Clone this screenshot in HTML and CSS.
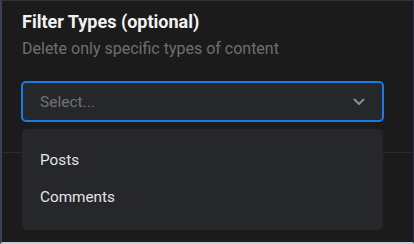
FILE: index.html
```
<!DOCTYPE html>
<html lang="en">
<head>
    <meta charset="UTF-8">
    <meta name="viewport" content="width=device-width, initial-scale=1.0">
    <title>Filter Types</title>
    <link rel="stylesheet" href="styles.css">
</head>
<body>

    <div class="panel">
        <div class="field">
            <h3 class="field-title">Filter Types (optional)</h3>
            <p class="field-hint">Delete only specific types of content</p>

            <div class="select-wrap">
                <div class="select-box">
                    <span class="placeholder">Select...</span>
                    <svg class="chevron" width="12" height="8" viewBox="0 0 12 8">
                        <path d="M1.5 1.5 L6 6 L10.5 1.5" fill="none" stroke="#8b8d91" stroke-width="2" stroke-linecap="round" stroke-linejoin="round"/>
                    </svg>
                </div>

                <ul class="menu">
                    <li>Posts</li>
                    <li>Comments</li>
                </ul>
            </div>
        </div>

        <div class="divider"></div>
    </div>

</body>
</html>
```

FILE: styles.css
```
body {
    font-family: Roboto, "Noto Sans", Arial, sans-serif;
    background-color: #1b1b1b;
    margin: 0;
    padding: 0;
}

.panel {
    box-sizing: border-box;
    width: 414px;
    height: 244px;
    background-color: #1b1b1b;
    border-top: 1px solid #2e323b;
    border-left: 2px solid #3b4150;
    border-right: 1px solid #2b3040;
    border-bottom: 2px solid #c8cdd6;
    overflow: hidden;
}

.field {
    padding: 10px 28px 0 20px;
}

    .field-title {
        margin: 0;
        font-size: 18px;
        font-weight: 700;
        line-height: 22px;
        color: #f2f2f2;
    }

    .field-hint {
        margin: 6px 0 0;
        font-size: 16px;
        line-height: 20px;
        color: #6f6f6f;
    }

.select-wrap {
    position: relative;
    margin-top: 22px;
}

.select-box {
    box-sizing: border-box;
    height: 41px;
    width: 363px;
    margin-left: -1px;
    display: flex;
    align-items: center;
    justify-content: space-between;
    padding: 0 17px 0 17px;
    background-color: #25272b;
    border: 2px solid #1a7be6;
    border-radius: 5px;
}

    .placeholder {
        font-size: 15.5px;
        color: #717378;
    }

.menu {
    position: absolute;
    top: 48px;
    left: 0;
    width: 361px;
    height: 101px;
    box-sizing: border-box;
    margin: 0;
    padding: 13px 0 0;
    list-style: none;
    background-color: #25272b;
    border-radius: 5px;
    z-index: 2;
}

    .menu li {
        padding: 0 18px;
        font-size: 15.3px;
        line-height: 37px;
        color: #e4e4e4;
    }

.divider {
    height: 1px;
    margin-top: 30px;
    background-color: #2b2b2b;
}
```
